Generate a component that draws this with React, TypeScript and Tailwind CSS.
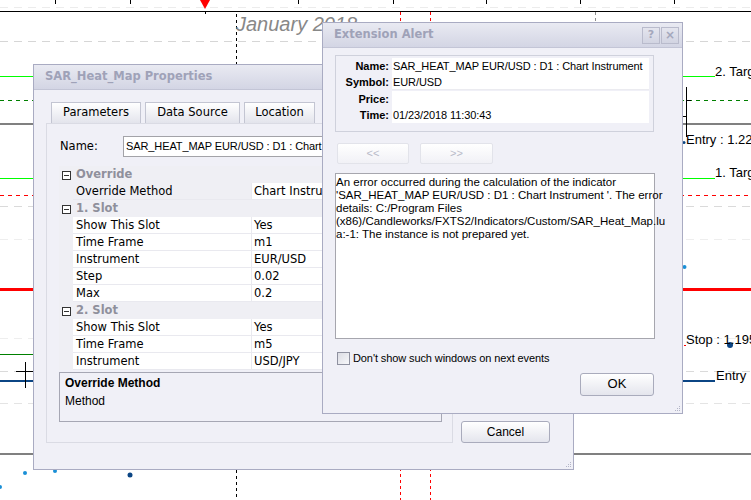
import React from "react";

const win = "font-['DejaVu_Sans',Tahoma,sans-serif]";
const arial = "font-['Liberation_Sans',Arial,sans-serif]";

type Row = { cat?: string; name?: string; value?: string; sel?: boolean };

const rows: Row[] = [
  { cat: "Override" },
  { name: "Override Method", value: "Chart Instrument", sel: true },
  { cat: "1. Slot" },
  { name: "Show This Slot", value: "Yes" },
  { name: "Time Frame", value: "m1" },
  { name: "Instrument", value: "EUR/USD" },
  { name: "Step", value: "0.02" },
  { name: "Max", value: "0.2" },
  { cat: "2. Slot" },
  { name: "Show This Slot", value: "Yes" },
  { name: "Time Frame", value: "m5" },
  { name: "Instrument", value: "USD/JPY" },
];

const errorLines = [
  "An error occurred during the calculation of the indicator",
  "'SAR_HEAT_MAP EUR/USD : D1 : Chart Instrument '. The error",
  "details: C:/Program Files",
  "(x86)/Candleworks/FXTS2/Indicators/Custom/SAR_Heat_Map.lu",
  "a:-1: The instance is not prepared yet.",
];

const info = [
  ["Name:", "SAR_HEAT_MAP EUR/USD : D1 : Chart Instrument"],
  ["Symbol:", "EUR/USD"],
  ["Price:", ""],
  ["Time:", "01/23/2018 11:30:43"],
];

const Chart = () => (
  <svg className="absolute left-0 top-0" width={751} height={500} viewBox="0 0 751 500">
    {/* grid */}
    <line x1={0} y1={7.5} x2={751} y2={7.5} stroke="#ececec" strokeDasharray="8 6" />
    <line x1={0} y1={41.5} x2={751} y2={41.5} stroke="#d6d6d6" strokeDasharray="8 6" />
    <line x1={0} y1={206.5} x2={751} y2={206.5} stroke="#dadada" strokeDasharray="8 6" />
    <line x1={0} y1={239.5} x2={751} y2={239.5} stroke="#eeeeee" strokeDasharray="8 6" />
    <line x1={0} y1={338.5} x2={751} y2={338.5} stroke="#eeeeee" strokeDasharray="8 6" />
    <line x1={0} y1={371.5} x2={751} y2={371.5} stroke="#dadada" strokeDasharray="8 6" />
    <line x1={0} y1={403.5} x2={751} y2={403.5} stroke="#e4e4e4" strokeDasharray="8 6" />

    {/* time axis */}
    <line x1={0} y1={11.5} x2={751} y2={11.5} stroke="#000" />
    {[55, 130, 298, 393, 486, 580, 674].map((x) => (
      <line key={x} x1={x + 0.5} y1={0} x2={x + 0.5} y2={4} stroke="#000" />
    ))}
    <line x1={205.5} y1={12} x2={205.5} y2={14} stroke="#000" />
    <polygon points="200,0 210,0 205,9" fill="#ff0000" />

    {/* verticals */}
    <line x1={236.5} y1={14} x2={236.5} y2={500} stroke="#000" strokeDasharray="3 3" />
    <line x1={400.5} y1={12} x2={400.5} y2={500} stroke="#ff0000" strokeDasharray="3 3" />
    <line x1={430.5} y1={12} x2={430.5} y2={500} stroke="#ff0000" strokeDasharray="3 3" />
    <line x1={595.5} y1={12} x2={595.5} y2={30} stroke="#8c8c8c" strokeDasharray="3 3" />

    {/* levels */}
    <line x1={0} y1={76.5} x2={715} y2={76.5} stroke="#00ff00" />
    <line x1={0} y1={100.5} x2={751} y2={100.5} stroke="#008000" strokeDasharray="4 4" />
    <rect x={0} y={123} width={751} height={2} fill="#808080" />
    <line x1={686.5} y1={87} x2={686.5} y2={137} stroke="#000" />
    <line x1={686} y1={100.5} x2={691} y2={100.5} stroke="#000" />
    <line x1={683} y1={116.5} x2={686} y2={116.5} stroke="#000" />
    <line x1={0} y1={178.5} x2={715} y2={178.5} stroke="#00ff00" />
    <line x1={0} y1={195.5} x2={751} y2={195.5} stroke="#ff0000" strokeDasharray="4 4" />
    <rect x={0} y={288} width={751} height={3} fill="#ff0000" />
    <line x1={0} y1={354.5} x2={40} y2={354.5} stroke="#008000" />
    <rect x={0} y={380} width={715} height={2} fill="#0b4584" />
    <rect x={0} y={453} width={751} height={2} fill="#808080" />

    {/* cross marker */}
    <line x1={25.5} y1={362} x2={25.5} y2={388} stroke="#000" />
    <line x1={16} y1={371.5} x2={34} y2={371.5} stroke="#000" />

    {/* dots */}
    <circle cx={684} cy={142.5} r={1.5} fill="#0b4584" />
    <circle cx={684.5} cy={267} r={2} fill="#1a8fd6" />
    <line x1={684} y1={345.5} x2={686} y2={345.5} stroke="#ff0000" />
    <circle cx={730} cy={345} r={3} fill="#0b4584" />
    <circle cx={25} cy={473} r={2} fill="#1a8fd6" />
    <circle cx={55} cy={471} r={2} fill="#1a8fd6" />
    <circle cx={130} cy={475} r={2.5} fill="#0b4584" />
    <circle cx={0} cy={487} r={2} fill="#1a8fd6" />
  </svg>
);

const Grip = () => (
  <svg className="absolute right-[1px] bottom-[1px]" width={8} height={8} viewBox="0 0 8 8">
    <rect x={6} y={2} width={1} height={1} fill="#b3b5c7" />
    <rect x={4} y={4} width={1} height={1} fill="#b3b5c7" />
    <rect x={6} y={4} width={1} height={1} fill="#b3b5c7" />
    <rect x={2} y={6} width={1} height={1} fill="#b3b5c7" />
    <rect x={4} y={6} width={1} height={1} fill="#b3b5c7" />
    <rect x={6} y={6} width={1} height={1} fill="#b3b5c7" />
  </svg>
);

const TitleBar = ({ title, buttons }: { title: string; buttons?: boolean }) => (
  <div className="h-[25px] shrink-0 flex items-center justify-between pl-[11px] pr-[3px] border-b border-[#c3c5d6] bg-linear-to-b from-[#e9eaf2] to-[#d3d5e4]">
    <span className={`${win} text-[11.5px] font-bold text-[#9fa2b8]`}>{title}</span>
    {buttons && (
      <div className="flex gap-[1px]">
        <div className={`${win} w-[18px] h-[17px] border border-[#b9bbcc] bg-linear-to-b from-[#e4e5ee] to-[#d2d4e2] flex items-center justify-center text-[11px] font-bold text-[#a4a7bc]`}>
          ?
        </div>
        <div className={`${win} w-[18px] h-[17px] border border-[#b9bbcc] bg-linear-to-b from-[#e4e5ee] to-[#d2d4e2] flex items-center justify-center text-[12px] font-bold text-[#a4a7bc]`}>
          ×
        </div>
      </div>
    )}
  </div>
);

const PropertiesDialog = () => (
  <div className="absolute left-[33px] top-[64px] w-[541px] h-[406px] border border-[#a9abc2] bg-[#f0f0f7] flex flex-col">
    <TitleBar title="SAR_Heat_Map Properties" />
    <div className="flex flex-1 pl-[12px] pt-[12px] pb-[26px]">
      <div className="flex flex-col w-[407px]">
        <div className={`${win} text-[11.5px] text-black flex gap-[4px] pl-[5px]`}>
          <div className="w-[90px] h-[21px] border border-b-0 border-[#c3c5d2] bg-linear-to-b from-white to-[#e3e4ec] flex items-center justify-center">
            Parameters
          </div>
          <div className="w-[95px] h-[21px] border border-b-0 border-[#c3c5d2] bg-linear-to-b from-white to-[#e3e4ec] flex items-center justify-center">
            Data Source
          </div>
          <div className="w-[71px] h-[21px] border border-b-0 border-[#c3c5d2] bg-linear-to-b from-white to-[#e3e4ec] flex items-center justify-center">
            Location
          </div>
        </div>
        <div className="flex-1 border border-[#dadbe4] flex flex-col pl-[12px] pr-[10px] pt-[12px]">
          <div className="flex items-center h-[21px]">
            <span className={`${win} text-[11.5px] w-[64px] shrink-0 pl-[1px]`}>Name:</span>
            <div className={`${arial} flex-1 h-[21px] border border-[#a3a3a8] bg-white flex items-center pl-[2px] text-[11px] tracking-[-0.1px] whitespace-nowrap overflow-hidden`}>
              SAR_HEAT_MAP EUR/USD : D1 : Chart Instrument
            </div>
          </div>
          <div className={`${win} text-[11.5px] mt-[9px] bg-[#efeff4] flex flex-col`}>
            {rows.map((r, i) =>
              r.cat ? (
                <div key={i} className="flex h-[17px] pt-[1px]">
                  <div className="w-[14px] flex items-center justify-center">
                    <div className="w-[9px] h-[9px] border border-[#333] bg-white flex items-center justify-center">
                      <div className="w-[5px] h-[1px] bg-[#333]" />
                    </div>
                  </div>
                  <div className="flex-1 pl-[3px] flex items-center font-bold text-[#8f909c]">{r.cat}</div>
                </div>
              ) : (
                <div key={i} className="flex h-[17px]">
                  <div className="w-[14px] shrink-0" />
                  <div
                    className={`w-[178px] shrink-0 pl-[3px] pt-[1px] flex items-center border-b border-[#e9e9ef] whitespace-nowrap ${
                      r.sel ? "bg-[#efeff4]" : "bg-white"
                    }`}
                  >
                    {r.name}
                  </div>
                  <div className="flex-1 pl-[2px] pt-[1px] flex items-center border-b border-l border-[#e9e9ef] bg-white whitespace-nowrap">
                    {r.value}
                  </div>
                </div>
              )
            )}
          </div>
          <div className={`${arial} mt-[2px] h-[50px] border border-[#a6a7b4] flex flex-col gap-[4px] pl-[5px] pt-[3px] text-[12px] leading-[14px] text-black`}>
            <span className="font-bold">Override Method</span>
            <span>Method</span>
          </div>
        </div>
      </div>
      <div className="flex flex-col justify-end pl-[8px]">
        <button className={`${arial} w-[89px] h-[22px] border border-[#a9abbc] rounded-[3px] bg-linear-to-b from-white to-[#e4e5ed] text-[12px] text-black`}>
          Cancel
        </button>
      </div>
    </div>
    <Grip />
  </div>
);

const AlertDialog = () => (
  <div className="absolute left-[322px] top-[22px] w-[361px] h-[392px] border border-[#a9abc2] bg-[#f0f0f7] flex flex-col">
    <TitleBar title="Extension Alert" buttons />
    <div className={`${arial} text-[11px] text-black flex flex-col items-start pl-[12px] pt-[7px]`}>
      <div className="w-[319px] h-[77px] border border-[#cfd1dc] pl-[1px] pr-[4px] pt-[2px] flex flex-col">
        {info.map(([k, v], i) => (
          <div key={k} className={`flex h-[16px] ${i === 2 ? "mt-[1px]" : ""}`}>
            <div className="w-[55px] shrink-0 pr-[3px] text-right font-bold leading-[16px]">{k}</div>
            <div
              className={`flex-1 min-w-0 bg-white pl-[1px] leading-[16px] tracking-[-0.1px] whitespace-nowrap overflow-hidden ${
                i === 1 ? "border-b border-[#ebebf0]" : ""
              }`}
            >
              {v}
            </div>
          </div>
        ))}
      </div>
      <div className="flex gap-[11px] mt-[11px] ml-[2px]">
        <div className="w-[72px] h-[21px] border border-[#e2e3ea] rounded-[2px] bg-linear-to-b from-white to-[#f1f1f6] flex items-center justify-center text-[11px] text-[#b9bbc9]">
          &lt;&lt;
        </div>
        <div className="w-[73px] h-[21px] border border-[#e2e3ea] rounded-[2px] bg-linear-to-b from-white to-[#f1f1f6] flex items-center justify-center text-[11px] text-[#b9bbc9]">
          &gt;&gt;
        </div>
      </div>
      <div className="mt-[9px] w-[320px] h-[166px] border border-[#a6a6ae] bg-white pt-[2px] text-[11.5px] leading-[13px] flex flex-col">
        {errorLines.map((l) => (
          <span key={l} className="whitespace-nowrap">
            {l}
          </span>
        ))}
      </div>
      <div className="mt-[11px] ml-[2px] flex items-center gap-[3px]">
        <div className="w-[13px] h-[13px] border border-[#8f91a0] bg-linear-to-br from-[#dcdde4] to-[#f7f7fa]" />
        <span className="tracking-[-0.1px]">Don't show such windows on next events</span>
      </div>
      <button className="mt-[6px] ml-[245px] w-[74px] h-[23px] border border-[#a9abbc] rounded-[3px] bg-linear-to-b from-white to-[#e4e5ed] text-[13px] text-black">
        OK
      </button>
    </div>
    <Grip />
  </div>
);

const App = () => {
  return (
    <div className="relative w-[751px] h-[500px] bg-white overflow-hidden">
      <Chart />
      <div className={`${arial} absolute left-[236px] top-[13px] text-[20px] italic text-[#888] leading-[23px] whitespace-nowrap`}>
        January 2018
      </div>
      <div className={`${arial} absolute left-[715px] top-[64px] text-[13px] leading-[15px] whitespace-nowrap`}>2. Target</div>
      <div className={`${arial} absolute left-[686px] top-[132px] text-[13px] leading-[15px] whitespace-nowrap`}>Entry : 1.2250</div>
      <div className={`${arial} absolute left-[715px] top-[165px] text-[13px] leading-[15px] whitespace-nowrap`}>1. Target</div>
      <div className={`${arial} absolute left-[686px] top-[332px] text-[13px] leading-[15px] whitespace-nowrap`}>Stop : 1.1950</div>
      <div className={`${arial} absolute left-[716px] top-[368px] text-[13px] leading-[15px] whitespace-nowrap`}>Entry</div>
      <PropertiesDialog />
      <AlertDialog />
    </div>
  );
};

export default App;
